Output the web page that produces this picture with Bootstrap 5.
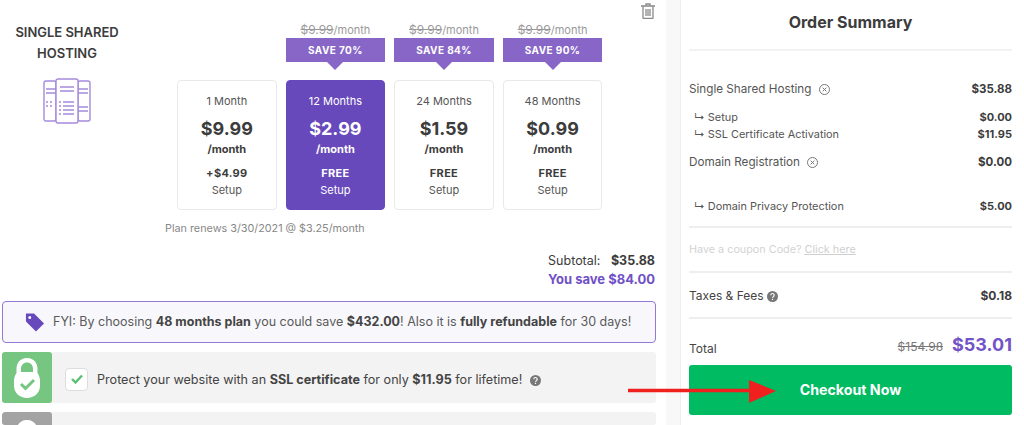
<!DOCTYPE html>
<html lang="en">

<head>
  <meta charset="utf-8">
  <meta name="viewport" content="width=device-width, initial-scale=1.0">
  <title>Order Summary</title>
  <link href="https://cdn.jsdelivr.net/npm/bootstrap@5.3.3/dist/css/bootstrap.min.css" rel="stylesheet">
  <style>
    html,
    body {
      height: 425px;
      overflow: hidden;
    }

    body {
      font-family: Inter, "Liberation Sans", sans-serif;
      color: #3c3c3c;
      background: #f8f8f8;
      position: relative;
    }

    .page-wrap {
      height: 425px;
    }

    .left-side {
      width: 666px;
      background: #fff;
      padding: 3px 10px 0 2px;
    }

    .right-side {
      width: 344px;
      margin-left: 14px;
      background: #fff;
      border-left: 1px solid #eee;
      padding: 0 12px 0 8px;
    }

    .plan-area {
      height: 236px;
    }

    .product-box {
      width: 130px;
      margin-right: 45px;
      padding-top: 19px;
      text-align: center;
      font-size: 13px;
      line-height: 21px;
      font-weight: 600;
      letter-spacing: -.02px;
      white-space: nowrap;
    }

    .product-box svg {
      display: block;
      margin: 14px auto 0;
    }

    .plan-col {
      width: 99.6px;
      margin-right: 9px;
      text-align: center;
    }

    .old-price {
      font-size: 11px;
      line-height: 14px;
      margin-top: 20px;
      color: #9a9a9a;
      white-space: nowrap;
    }

    .old-price s {
      font-size: 12px;
    }

    .save-tag {
      position: relative;
      height: 24px;
      margin-top: 1px;
      background: #8766c7;
      color: #fff;
      font-size: 10px;
      line-height: 24px;
      font-weight: 700;
      letter-spacing: .4px;
    }

    .save-tag::after {
      content: "";
      position: absolute;
      left: 50%;
      top: 24px;
      margin-left: -8px;
      border-left: 8px solid transparent;
      border-right: 8px solid transparent;
      border-top: 8px solid #8766c7;
    }

    .plan-box {
      height: 130px;
      margin-top: 18px;
      padding-top: 13px;
      border: 1px solid #e9e9e9;
      border-radius: 4px;
      background: #fff;
      font-size: 11px;
    }

    .plan-box.chosen {
      background: #6749bb;
      border-color: #6749bb;
      color: #fff;
    }

    .plan-term {
      line-height: 14px;
      color: #555;
    }

    .chosen .plan-term,
    .chosen .plan-setup {
      color: #fff;
    }

    .plan-price {
      font-size: 18px;
      line-height: 22px;
      font-weight: 700;
      margin-top: 10px;
    }

    .plan-per {
      font-size: 11px;
      line-height: 16px;
      font-weight: 700;
      margin-top: 1px;
    }

    .plan-fee {
      font-size: 11px;
      line-height: 14px;
      font-weight: 700;
      margin-top: 9px;
      letter-spacing: .3px;
    }

    .plan-setup {
      line-height: 14px;
      margin-top: 3px;
      color: #555;
    }

    .trash-icon {
      margin-left: 30px;
    }

    .renew-note {
      font-size: 10.8px;
      line-height: 14px;
      color: #888;
      padding-left: 163px;
      margin-top: -17px;
    }

    .sum-lines {
      margin-top: 15px;
      padding-right: 1px;
      text-align: right;
      font-size: 12.5px;
      line-height: 19px;
    }

    .sum-lines b {
      font-weight: 700;
      margin-left: 7px;
    }

    .you-save {
      color: #6f50c6;
      font-weight: 700;
      font-size: 13px;
    }

    .fyi-box {
      height: 42px;
      margin-top: 12px;
      border: 1px solid #9378d6;
      border-radius: 4px;
      background: #f8f8fc;
      font-size: 12.5px;
      color: #5a5a5a;
      padding-left: 22px;
    }

    .fyi-box b {
      color: #444;
      font-weight: 700;
    }

    .addon-row {
      height: 51px;
      margin-top: 9px;
      background: #f3f3f3;
      border-radius: 3px;
      font-size: 12.6px;
      color: #444;
    }

    .addon-row b {
      font-weight: 700;
    }

    .addon-row.clipped {
      height: 13px;
      overflow: hidden;
    }

    .addon-text {
      margin-top: 5px;
    }

    .lock-tile {
      width: 50px;
      height: 51px;
      background: #76c580;
      border-radius: 3px;
      flex: none;
    }

    .lock-tile.off {
      background: #a3a3a3;
    }

    .tick-box {
      width: 23px;
      height: 23px;
      margin: 3px 9px 0 13px;
      background: #fff;
      border: 1px solid #ddd;
      border-radius: 4px;
      flex: none;
    }

    .panel-title {
      height: 51px;
      padding-top: 12px;
      text-align: center;
      font-size: 16px;
      line-height: 20px;
      font-weight: 700;
      border-bottom: 2px solid #f2f2f2;
    }

    .line-row {
      font-size: 11.7px;
      line-height: 14px;
      color: #555;
    }

    .line-row b {
      color: #3c3c3c;
      font-weight: 700;
      font-size: 11.5px;
    }

    .line-row.sub {
      font-size: 10.9px;
      padding-left: 5px;
    }

    .line-row.sub b {
      font-size: 11px;
    }

    .gap-first {
      margin-top: 31px;
    }

    .gap-a {
      margin-top: 14px;
    }

    .gap-b {
      margin-top: 3px;
    }

    .gap-c {
      margin-top: 14px;
    }

    .gap-d {
      margin-top: 30px;
    }

    .panel-rule {
      height: 2px;
      background: #eee;
    }

    .rule-after-lines {
      margin-top: 13px;
    }

    .coupon-row {
      height: 43px;
      font-size: 10.8px;
      color: #d3d3d3;
      line-height: 43px;
    }

    .coupon-row a {
      color: #cfcfcf;
    }

    .tax-row {
      height: 44px;
      padding-top: 2px;
      font-size: 12px;
      color: #444;
    }

    .tax-row b {
      font-weight: 700;
      color: #3c3c3c;
    }

    .total-row {
      height: 46px;
      padding-bottom: 7px;
      font-size: 12px;
      color: #444;
    }

    .total-old {
      font-size: 12px;
      color: #777;
      margin-right: 9px;
    }

    .total-now {
      font-size: 18px;
      font-weight: 700;
      color: #7254c8;
    }

    .checkout-btn {
      display: block;
      width: 100%;
      height: 50px;
      background: #00bb62;
      color: #fff;
      font-size: 14.2px;
      font-weight: 700;
      border: 0;
      border-radius: 3px;
      padding: 0;
    }

    .red-arrow {
      position: absolute;
      left: 626px;
      top: 378px;
    }
  </style>
</head>

<body>
  <div class="page-wrap d-flex">
    <div class="left-side">
      <div class="plan-area d-flex align-items-start">
        <div class="product-box">
          SINGLE SHARED<br>HOSTING
          <svg width="48" height="46" viewBox="0 0 48 46" fill="none" stroke="#a48bdc" stroke-width="1.4">
            <rect x="1" y="3" width="12" height="40" rx="2" />
            <rect x="35" y="3" width="12" height="40" rx="2" />
            <rect x="13" y="1" width="22" height="44" rx="2" fill="#fff" />
            <path d="M17 9h14M17 13h14M3 11h10M3 15h10M35 11h10M35 15h10M35 29h10M35 33h10" />
            <path d="M20 24h11M20 28h11M20 32h11M20 36h11M16 24h2M16 28h2M16 32h2M16 36h2M3 24h2M7 24h2M3 28h2M7 28h2" />
          </svg>
        </div>
        <div class="plan-col">
          <div class="old-price invisible">&nbsp;</div>
          <div class="save-tag invisible"></div>
          <div class="plan-box">
            <div class="plan-term">1 Month</div>
            <div class="plan-price">$9.99</div>
            <div class="plan-per">/month</div>
            <div class="plan-fee">+$4.99</div>
            <div class="plan-setup">Setup</div>
          </div>
        </div>
        <div class="plan-col">
          <div class="old-price"><s>$9.99</s>/month</div>
          <div class="save-tag">SAVE 70%</div>
          <div class="plan-box chosen">
            <div class="plan-term">12 Months</div>
            <div class="plan-price">$2.99</div>
            <div class="plan-per">/month</div>
            <div class="plan-fee">FREE</div>
            <div class="plan-setup">Setup</div>
          </div>
        </div>
        <div class="plan-col">
          <div class="old-price"><s>$9.99</s>/month</div>
          <div class="save-tag">SAVE 84%</div>
          <div class="plan-box">
            <div class="plan-term">24 Months</div>
            <div class="plan-price">$1.59</div>
            <div class="plan-per">/month</div>
            <div class="plan-fee">FREE</div>
            <div class="plan-setup">Setup</div>
          </div>
        </div>
        <div class="plan-col">
          <div class="old-price"><s>$9.99</s>/month</div>
          <div class="save-tag">SAVE 90%</div>
          <div class="plan-box">
            <div class="plan-term">48 Months</div>
            <div class="plan-price">$0.99</div>
            <div class="plan-per">/month</div>
            <div class="plan-fee">FREE</div>
            <div class="plan-setup">Setup</div>
          </div>
        </div>
        <svg class="trash-icon" width="14" height="16" viewBox="0 0 14 16" fill="none" stroke="#8a8a8a" stroke-width="1.3">
          <path d="M0 3h14M5 3V1h4v2M2 3v11.5a1 1 0 0 0 1 1h8a1 1 0 0 0 1-1V3M5 6v7M7 6v7M9 6v7" />
        </svg>
      </div>
      <div class="renew-note">Plan renews 3/30/2021 @ $3.25/month</div>
      <div class="sum-lines">
        <div>Subtotal: <b>$35.88</b></div>
        <div class="you-save">You save $84.00</div>
      </div>
      <div class="fyi-box d-flex align-items-center">
        <svg class="me-2" width="20" height="20" viewBox="0 0 21 20">
          <path fill="#6749bb" d="M1 1h8.500L20 11.500 11.500 20 1 9.500zM5 3.600a1.600 1.600 0 1 0 0 3.200 1.600 1.600 0 0 0 0-3.200z" />
        </svg>
        <span>FYI: By choosing <b>48 months plan</b> you could save <b>$432.00</b>! Also it is <b>fully refundable</b> for 30 days!</span>
      </div>
      <div class="addon-row d-flex align-items-center">
        <div class="lock-tile d-flex align-items-center justify-content-center">
          <svg width="26" height="40" viewBox="0 0 26 40">
            <path fill="#fff" fill-rule="evenodd" d="M13 0C6 0 2.500 5 2.500 11v4C1 17 0 20 0 23v5c0 7 6 12 13 12s13-5 13-12v-5c0-3-1-6-2.500-8v-4C23.500 5 20 0 13 0zM7 14v-3c0-4 2.500-6.500 6-6.500s6 2.500 6 6.500v3z" />
            <path fill="none" stroke="#76c580" stroke-width="3" d="M7 26l4.500 4.500L20 22" />
          </svg>
        </div>
        <div class="tick-box d-flex align-items-center justify-content-center">
          <svg width="12" height="10" viewBox="0 0 12 10" fill="none" stroke="#5cbf74" stroke-width="2.400">
            <path d="M1 5l3.500 3.500L11 1.500" />
          </svg>
        </div>
        <span class="addon-text">Protect your website with an <b>SSL certificate</b> for only <b>$11.95</b> for lifetime!</span>
        <svg class="ms-2 addon-text" width="11" height="11" viewBox="0 0 11 11">
          <circle cx="5.500" cy="5.500" r="5.500" fill="#777" />
          <path d="M3.800 4.200a1.700 1.700 0 1 1 2.500 1.500c-.6.300-.8.600-.8 1.100M5.500 7.800v1.200" fill="none" stroke="#fff" stroke-width="1.200" />
        </svg>
      </div>
      <div class="addon-row clipped d-flex align-items-start">
        <div class="lock-tile off d-flex justify-content-center">
          <svg class="mt-2" width="26" height="40" viewBox="0 0 26 40">
            <path fill="#fff" d="M13 0C6 0 2.500 5 2.500 11v4C1 17 0 20 0 23v5c0 7 6 12 13 12s13-5 13-12v-5c0-3-1-6-2.500-8v-4C23.500 5 20 0 13 0z" />
          </svg>
        </div>
      </div>
    </div>

    <div class="right-side">
      <div class="panel-title">Order Summary</div>
      <div class="line-row d-flex justify-content-between gap-first">
        <span>Single Shared Hosting
          <svg class="ms-1" width="11" height="11" viewBox="0 0 11 11" fill="none" stroke="#777">
            <circle cx="5.500" cy="5.500" r="5" />
            <path d="M3.700 3.700l3.600 3.600M7.300 3.700l-3.600 3.600" />
          </svg>
        </span>
        <b>$35.88</b>
      </div>
      <div class="line-row sub d-flex justify-content-between gap-a"><span>↳ Setup</span><b>$0.00</b></div>
      <div class="line-row sub d-flex justify-content-between gap-b"><span>↳ SSL Certificate Activation</span><b>$11.95</b></div>
      <div class="line-row d-flex justify-content-between gap-c">
        <span>Domain Registration
          <svg class="ms-1" width="11" height="11" viewBox="0 0 11 11" fill="none" stroke="#777">
            <circle cx="5.500" cy="5.500" r="5" />
            <path d="M3.700 3.700l3.600 3.600M7.300 3.700l-3.600 3.600" />
          </svg>
        </span>
        <b>$0.00</b>
      </div>
      <div class="line-row sub d-flex justify-content-between gap-d"><span>↳ Domain Privacy Protection</span><b>$5.00</b></div>
      <div class="panel-rule rule-after-lines"></div>
      <div class="coupon-row">Have a coupon Code? <a href="#">Click here</a></div>
      <div class="panel-rule"></div>
      <div class="tax-row d-flex justify-content-between align-items-center">
        <span>Taxes &amp; Fees
          <svg width="11" height="11" viewBox="0 0 11 11">
            <circle cx="5.500" cy="5.500" r="5.500" fill="#777" />
            <path d="M3.800 4.200a1.700 1.700 0 1 1 2.500 1.500c-.6.300-.8.600-.8 1.100M5.500 7.800v1.200" fill="none" stroke="#fff" stroke-width="1.200" />
          </svg>
        </span>
        <b>$0.18</b>
      </div>
      <div class="panel-rule"></div>
      <div class="total-row d-flex justify-content-between align-items-end">
        <span>Total</span>
        <span><s class="total-old">$154.98</s><span class="total-now">$53.01</span></span>
      </div>
      <button class="checkout-btn" type="button">Checkout Now</button>
    </div>
  </div>

  <svg class="red-arrow" width="152" height="26" viewBox="0 0 152 26">
    <path d="M2 12.500h124" stroke="#f0201f" stroke-width="3.500" />
    <path d="M123 2l27 11-27 12z" fill="#f0201f" />
  </svg>

  <script src="https://cdn.jsdelivr.net/npm/bootstrap@5.3.3/dist/js/bootstrap.bundle.min.js"></script>
</body>

</html>
